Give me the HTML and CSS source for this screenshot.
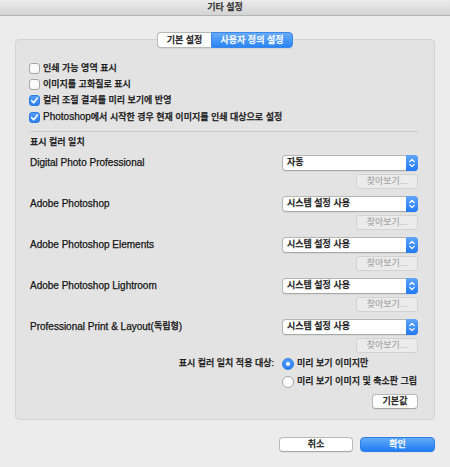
FILE: index.html
```html
<!DOCTYPE html>
<html lang="ko">
<head>
<meta charset="utf-8">
<title>기타 설정</title>
<link rel="stylesheet" href="styles.css">
</head>
<body>
<div class="window">
  <div class="titlebar">기타 설정</div>
  <div class="body">
    <div class="tabs">
      <div class="tab tab-left">기본 설정</div>
      <div class="tab tab-right active">사용자 정의 설정</div>
    </div>
    <div class="panel">
      <div class="checks">
        <div class="check"><span class="box"></span><span>인쇄 가능 영역 표시</span></div>
        <div class="check"><span class="box"></span><span>이미지를 고화질로 표시</span></div>
        <div class="check"><span class="box on"><svg width="9" height="9" viewBox="0 0 9 9"><path d="M1.7 4.7 L3.7 6.8 L7.4 2.1" fill="none" stroke="#fff" stroke-width="1.6" stroke-linecap="round" stroke-linejoin="round"/></svg></span><span>컬러 조절 결과를 미리 보기에 반영</span></div>
        <div class="check"><span class="box on"><svg width="9" height="9" viewBox="0 0 9 9"><path d="M1.7 4.7 L3.7 6.8 L7.4 2.1" fill="none" stroke="#fff" stroke-width="1.6" stroke-linecap="round" stroke-linejoin="round"/></svg></span><span><span class="lat">Photoshop</span>에서 시작한 경우 현재 이미지를 인쇄 대상으로 설정</span></div>
      </div>
      <div class="sep"></div>
      <div class="section-title">표시 컬러 일치</div>
      <div class="apps">
        <div class="app">
          <div class="app-name">Digital Photo Professional</div>
          <div class="app-ctrls">
            <div class="select"><span class="select-text">자동</span><span class="select-arrow"><svg width="10" height="14" viewBox="0 0 10 14"><path d="M2.8 5.6 L5 3.4 L7.2 5.6 M2.8 8.4 L5 10.6 L7.2 8.4" fill="none" stroke="#fff" stroke-width="1.3" stroke-linecap="round" stroke-linejoin="round"/></svg></span></div>
            <div class="browse">찾아보기...</div>
          </div>
        </div>
        <div class="app">
          <div class="app-name">Adobe Photoshop</div>
          <div class="app-ctrls">
            <div class="select"><span class="select-text">시스템 설정 사용</span><span class="select-arrow"><svg width="10" height="14" viewBox="0 0 10 14"><path d="M2.8 5.6 L5 3.4 L7.2 5.6 M2.8 8.4 L5 10.6 L7.2 8.4" fill="none" stroke="#fff" stroke-width="1.3" stroke-linecap="round" stroke-linejoin="round"/></svg></span></div>
            <div class="browse">찾아보기...</div>
          </div>
        </div>
        <div class="app">
          <div class="app-name">Adobe Photoshop Elements</div>
          <div class="app-ctrls">
            <div class="select"><span class="select-text">시스템 설정 사용</span><span class="select-arrow"><svg width="10" height="14" viewBox="0 0 10 14"><path d="M2.8 5.6 L5 3.4 L7.2 5.6 M2.8 8.4 L5 10.6 L7.2 8.4" fill="none" stroke="#fff" stroke-width="1.3" stroke-linecap="round" stroke-linejoin="round"/></svg></span></div>
            <div class="browse">찾아보기...</div>
          </div>
        </div>
        <div class="app">
          <div class="app-name">Adobe Photoshop Lightroom</div>
          <div class="app-ctrls">
            <div class="select"><span class="select-text">시스템 설정 사용</span><span class="select-arrow"><svg width="10" height="14" viewBox="0 0 10 14"><path d="M2.8 5.6 L5 3.4 L7.2 5.6 M2.8 8.4 L5 10.6 L7.2 8.4" fill="none" stroke="#fff" stroke-width="1.3" stroke-linecap="round" stroke-linejoin="round"/></svg></span></div>
            <div class="browse">찾아보기...</div>
          </div>
        </div>
        <div class="app">
          <div class="app-name">Professional Print &amp; Layout(<span class="ko">독립형</span>)</div>
          <div class="app-ctrls">
            <div class="select"><span class="select-text">시스템 설정 사용</span><span class="select-arrow"><svg width="10" height="14" viewBox="0 0 10 14"><path d="M2.8 5.6 L5 3.4 L7.2 5.6 M2.8 8.4 L5 10.6 L7.2 8.4" fill="none" stroke="#fff" stroke-width="1.3" stroke-linecap="round" stroke-linejoin="round"/></svg></span></div>
            <div class="browse">찾아보기...</div>
          </div>
        </div>
      </div>
      <div class="target">
        <div class="target-label">표시 컬러 일치 적용 대상:</div>
        <div class="radio-row"><span class="radio on"></span><span>미리 보기 이미지만</span></div>
        <div class="radio-row second"><span class="radio"></span><span>미리 보기 이미지 및 축소판 그림</span></div>
      </div>
      <div class="default-row"><div class="btn btn-default">기본값</div></div>
    </div>
    <div class="footer">
      <div class="btn btn-cancel">취소</div>
      <div class="btn btn-ok">확인</div>
    </div>
  </div>
</div>
</body>
</html>
```

FILE: styles.css
```css
* { box-sizing: border-box; }
html, body { margin: 0; padding: 0; }
body {
  width: 450px;
  height: 467px;
  overflow: hidden;
  background: #ececec;
  font-family: "Liberation Sans", "Noto Sans CJK KR", sans-serif;
  font-size: 9px;
  font-weight: 500;
  line-height: 1;
  color: #141414;
  -webkit-text-stroke: 0.25px currentColor;
}
.window { height: 467px; background: #ececec; }

.titlebar {
  height: 16px;
  border-bottom: 1px solid #b4b4b4;
  background: linear-gradient(#ebebeb, #d4d4d4);
  display: flex;
  align-items: center;
  justify-content: center;
  color: #2a2a2a;
}

.body { padding: 16px 15px 0; }

.tabs {
  position: relative;
  z-index: 1;
  display: flex;
  justify-content: center;
  height: 16px;
  margin-bottom: -9px;
}
.tab {
  height: 16px;
  display: flex;
  align-items: center;
  justify-content: center;
  background: #fff;
  border: 1px solid #b8b8b8;
  box-shadow: 0 1px 0 rgba(0,0,0,0.06);
}
.tab-left { width: 54px; border-radius: 4px 0 0 4px; border-right: none; }
.tab-right { width: 82px; border-radius: 0 4px 4px 0; }
.tab.active {
  background: linear-gradient(#68abfa, #2a84f6);
  border-color: #3d86ea;
  color: #fff;
}

.panel {
  background: #e3e3e3;
  border: 1px solid #d3d3d3;
  border-radius: 4px;
  padding: 20px 16px 10px 13px;
}

.checks { display: flex; flex-direction: column; }
.check {
  height: 16.4px;
  display: flex;
  align-items: center;
  gap: 3px;
}
.box {
  width: 11px;
  height: 11px;
  flex: none;
  border: 1px solid #a7a7a7;
  border-radius: 3px;
  background: linear-gradient(#ffffff, #f6f6f6);
  display: flex;
  align-items: center;
  justify-content: center;
}
.box.on {
  background: linear-gradient(#529cf9, #2c80f5);
  border-color: #2f7be2;
}
.lat { font-size: 10px; }
.ko { font-size: 9px; }

.sep {
  height: 1px;
  background: #cfcfcf;
  margin-top: 5.4px;
}
.section-title {
  height: 16px;
  margin-top: 3px;
  display: flex;
  align-items: center;
  padding-left: 1px;
}

.apps { margin-top: 4px; display: flex; flex-direction: column; }
.app {
  display: flex;
  justify-content: space-between;
  align-items: flex-start;
  margin-bottom: 7px;
}
.app:last-child { margin-bottom: 0; }
.app-name {
  height: 16px;
  display: flex;
  align-items: center;
  font-size: 10px;
  padding-left: 1px;
}
.app-ctrls {
  width: 136px;
  display: flex;
  flex-direction: column;
  align-items: flex-end;
  gap: 3px;
}
.select {
  width: 136px;
  height: 16px;
  display: flex;
  background: #fff;
  border: 1px solid #b6b6b6;
  border-bottom-color: #a9a9a9;
  border-radius: 4px;
  box-shadow: 0 1px 0 rgba(0,0,0,0.05);
}
.select-text {
  flex: 1;
  display: flex;
  align-items: center;
  padding-left: 4px;
}
.select-arrow {
  width: 12px;
  margin: -1px -1px -1px 0;
  border-radius: 0 4px 4px 0;
  background: linear-gradient(#5fa5fa, #2279f3);
  display: flex;
  align-items: center;
  justify-content: center;
}
.browse {
  width: 62px;
  height: 15px;
  display: flex;
  align-items: center;
  justify-content: center;
  background: #ebebeb;
  border: 1px solid #d2d2d2;
  border-radius: 3px;
  color: #a9a9a9;
  -webkit-text-stroke: 0;
}

.target {
  margin-top: 2px;
  display: grid;
  grid-template-columns: 1fr 136px;
  grid-auto-rows: 18px;
  column-gap: 8px;
}
.target-label {
  display: flex;
  align-items: center;
  justify-content: flex-end;
}
.radio-row {
  display: flex;
  align-items: center;
  gap: 3px;
}
.radio-row.second { grid-column: 2; }
.radio {
  width: 12px;
  height: 12px;
  flex: none;
  border-radius: 50%;
  border: 1px solid #a7a7a7;
  background: #fff;
  display: flex;
  align-items: center;
  justify-content: center;
}
.radio.on {
  background: linear-gradient(#529cf9, #2c80f5);
  border-color: #2f7be2;
}
.radio.on::after {
  content: "";
  width: 4px;
  height: 4px;
  border-radius: 50%;
  background: #fff;
}

.default-row {
  margin-top: 3px;
  display: flex;
  justify-content: flex-end;
}
.btn {
  height: 15px;
  display: flex;
  align-items: center;
  justify-content: center;
  background: #fff;
  border: 1px solid #b9b9b9;
  border-bottom-color: #a8a8a8;
  border-radius: 4px;
  box-shadow: 0 1px 0 rgba(0,0,0,0.05);
}
.btn-default { width: 46px; }

.footer {
  margin-top: 17px;
  display: flex;
  justify-content: flex-end;
  gap: 7px;
}
.btn-cancel { width: 74px; }
.btn-ok {
  width: 75px;
  background: linear-gradient(#65aafa, #1f7df4);
  border-color: #2d7fe6;
  color: #fff;
}
```
